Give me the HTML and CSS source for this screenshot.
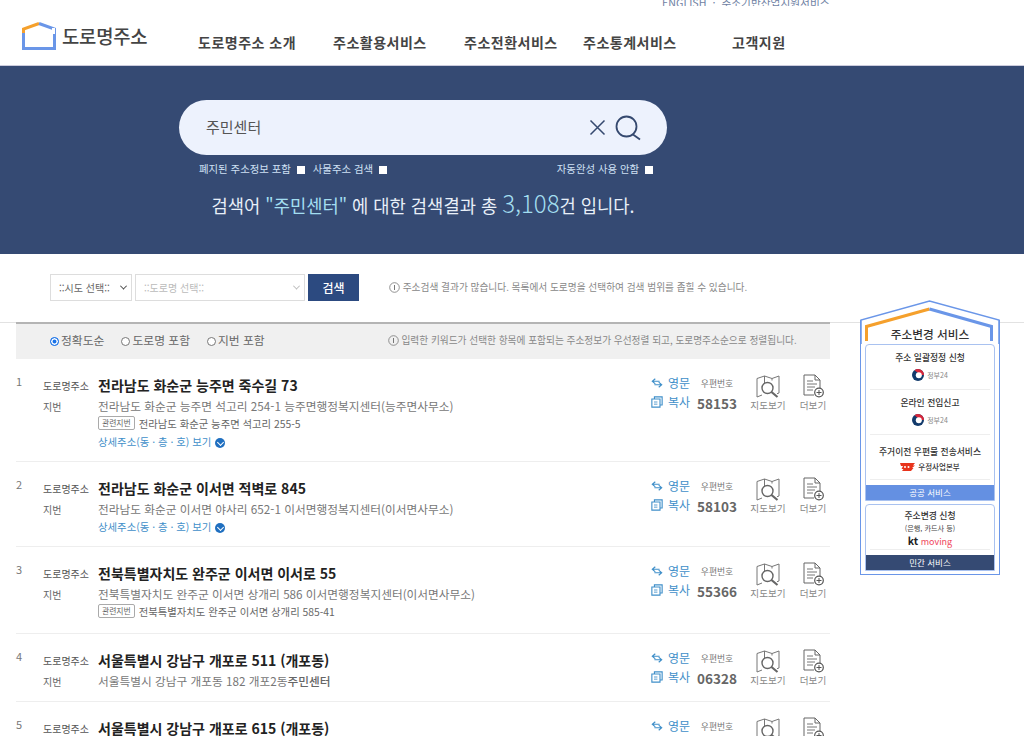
FILE: index.html
```html
<!DOCTYPE html>
<html lang="ko">
<head>
    <meta charset="UTF-8">
    <title>도로명주소 검색결과</title>
    <link rel="stylesheet" href="styles.css">
</head>
<body>
    <svg class="sprites" width="0" height="0">
        <symbol id="i-swap" viewBox="0 0 14 12"><path d="M5 1 1.500 4 5 7M1.500 4H10M9 5l3.500 3L9 11M12.500 8H4" fill="none" stroke="currentColor" stroke-width="1.300"/></symbol>
        <symbol id="i-copy" viewBox="0 0 14 14"><path d="M4 3.500V1h9v9.500h-2.500M1 3.500h9.500V13H1z" fill="none" stroke="currentColor" stroke-width="1.300"/><path d="M3.500 7h4M3.500 9.500h4" stroke="currentColor"/></symbol>
        <symbol id="i-map" viewBox="0 0 24 23"><path d="M1 3.500 8.500 1 16 3.500 23 1v17l-2 .7M8.500 1v7M16 3.500v2M1 3.500V22l5-2" fill="none" stroke="#777" stroke-width="1"/><circle cx="11.500" cy="13" r="5.500" fill="#fff" stroke="#666" stroke-width="1.400"/><path d="M15.500 17l6 5" stroke="#666" stroke-width="2.200"/></symbol>
        <symbol id="i-more" viewBox="0 0 22 24"><path d="M12 21H2V1h11l5 5v8M13 1v5h5" fill="none" stroke="#666"/><path d="M5 7h6M5 10h10M5 13h8M5 16h6" stroke="#777"/><circle cx="17" cy="18.500" r="4.300" fill="#fff" stroke="#555" stroke-width="1.200"/><path d="M14.500 18.500h5M17 16v5" stroke="#555"/></symbol>
        <symbol id="i-info" viewBox="0 0 11 11"><circle cx="5.500" cy="5.500" r="4.800" fill="none" stroke="#777" stroke-width=".8"/><path d="M5.500 3v5" stroke="#777"/></symbol>
        <symbol id="i-gov" viewBox="0 0 12 12"><circle cx="6" cy="6" r="6" fill="#123a6b"/><path d="M2.500 1.200A6 6 0 0 1 12 6H8.500z" fill="#d8263a"/><circle cx="6.800" cy="6.300" r="3" fill="#fff"/></symbol>
        <symbol id="i-post" viewBox="0 0 15 8"><path d="M0 0h15l-2 2.500h2L12 5h1.500L11 8H2l1.500-2H1.500L3 3H1z" fill="#e8341c"/><circle cx="5" cy="4" r="1" fill="#fff"/><circle cx="8.500" cy="4" r="1" fill="#fff"/></symbol>
    </svg>

    <header class="site-header">
        <div class="util-links">ENGLISH &nbsp;·&nbsp; 주소기반산업지원서비스</div>
        <div class="header-main">
            <a class="logo">
                <svg width="34" height="28" viewBox="0 0 34 28">
                    <path d="M1.500 11V7L17 1.500" fill="none" stroke="#f5a02c" stroke-width="3"/>
                    <path d="M17 1.500 32.500 7v19.500h-31V11" fill="none" stroke="#6a96e8" stroke-width="3"/>
                    <path d="M33 9h-3" stroke="#fff" stroke-width="6"/>
                </svg>
                <span>도로명주소</span>
            </a>
            <nav class="main-nav">
                <a class="nav-1">도로명주소 소개</a>
                <a class="nav-2">주소활용서비스</a>
                <a class="nav-3">주소전환서비스</a>
                <a class="nav-4">주소통계서비스</a>
                <a class="nav-5">고객지원</a>
            </nav>
        </div>
    </header>

    <section class="hero">
        <div class="search-box">
            <span class="search-text">주민센터</span>
            <svg width="17" height="17" viewBox="0 0 17 17"><path d="M1.500 1.500l14 14M15.500 1.500l-14 14" stroke="#35496f" stroke-width="1.500"/></svg>
            <svg width="26" height="26" viewBox="0 0 26 26"><circle cx="11.500" cy="11.500" r="10" fill="none" stroke="#35496f" stroke-width="1.800"/><path d="M18 19.500l7 5" stroke="#35496f" stroke-width="1.800"/></svg>
        </div>
        <div class="search-options">
            <label>폐지된 주소정보 포함 <i class="check"></i></label>
            <label>사물주소 검색 <i class="check"></i></label>
            <label class="opt-right">자동완성 사용 안함 <i class="check"></i></label>
        </div>
        <p class="result-summary">검색어 <em>"주민센터"</em> 에 대한 검색결과 총 <strong>3,108</strong>건 입니다.</p>
    </section>

    <div class="filter-bar">
        <div class="fake-select dark">::시도 선택:: <b class="caret"></b></div>
        <div class="fake-select wide">::도로명 선택:: <b class="caret"></b></div>
        <button class="filter-btn">검색</button>
        <p class="note"><svg><use href="#i-info"/></svg> 주소검색 결과가 많습니다. 목록에서 도로명을 선택하여 검색 범위를 좁힐 수 있습니다.</p>
    </div>

    <div class="page-line"></div>

    <aside class="side-box">
        <svg class="roof" width="140" height="44" viewBox="0 0 140 44">
            <path d="M1 44V20L69.500 1 139 20v24" fill="#fff" stroke="#6a96e8" stroke-width="1.500"/>
            <path d="M6.500 41V26.500L69.500 9" fill="none" stroke="#f5a02c" stroke-width="3"/>
            <path d="M69.500 9l62 17.500V41" fill="none" stroke="#6a96e8" stroke-width="3"/>
        </svg>
        <h3>주소변경 서비스</h3>
        <div class="side-group">
            <div class="side-item"><strong>주소 일괄정정 신청</strong><span class="gov"><svg width="12" height="12"><use href="#i-gov"/></svg>정부24</span></div>
            <div class="side-item"><strong>온라인 전입신고</strong><span class="gov"><svg width="12" height="12"><use href="#i-gov"/></svg>정부24</span></div>
            <div class="side-item item-post"><strong>주거이전 우편물 전송서비스</strong><span class="post"><svg width="15" height="8"><use href="#i-post"/></svg>우정사업본부</span></div>
            <div class="side-label blue">공공 서비스</div>
        </div>
        <div class="side-group">
            <div class="side-item last"><strong>주소변경 신청</strong><small>(은행, 카드사 등)</small><span class="kt"><b>kt</b> moving</span></div>
            <div class="side-label navy">민간 서비스</div>
        </div>
    </aside>

    <main class="results">
        <div class="sort-bar">
            <label><i class="radio on"></i>정확도순</label>
            <label><i class="radio"></i>도로명 포함</label>
            <label><i class="radio"></i>지번 포함</label>
            <p class="note"><svg><use href="#i-info"/></svg> 입력한 키워드가 선택한 항목에 포함되는 주소정보가 우선정렬 되고, 도로명주소순으로 정렬됩니다.</p>
        </div>

        <article class="row row-1">
            <span class="num">1</span>
            <div class="addr">
                <div class="line"><span class="tag">도로명주소</span><h2>전라남도 화순군 능주면 죽수길 73</h2></div>
                <div class="line sub"><span class="tag">지번</span><p>전라남도 화순군 능주면 석고리 254-1 능주면행정복지센터(능주면사무소)</p></div>
                <div class="line rel"><span class="rel-tag">관련지번</span>전라남도 화순군 능주면 석고리 255-5</div>
                <a class="detail">상세주소(동 · 층 · 호) 보기 <i class="down"></i></a>
            </div>
            <div class="actions">
                <div class="links"><a><svg><use href="#i-swap"/></svg>영문</a><a><svg><use href="#i-copy"/></svg>복사</a></div>
                <div class="zip"><small>우편번호</small><b>58153</b></div>
                <div class="tool tool-map"><svg class="t-map"><use href="#i-map"/></svg>지도보기</div>
                <div class="tool tool-more"><svg class="t-more"><use href="#i-more"/></svg>더보기</div>
            </div>
        </article>

        <article class="row row-2">
            <span class="num">2</span>
            <div class="addr">
                <div class="line"><span class="tag">도로명주소</span><h2>전라남도 화순군 이서면 적벽로 845</h2></div>
                <div class="line sub"><span class="tag">지번</span><p>전라남도 화순군 이서면 야사리 652-1 이서면행정복지센터(이서면사무소)</p></div>
                <a class="detail">상세주소(동 · 층 · 호) 보기 <i class="down"></i></a>
            </div>
            <div class="actions">
                <div class="links"><a><svg><use href="#i-swap"/></svg>영문</a><a><svg><use href="#i-copy"/></svg>복사</a></div>
                <div class="zip"><small>우편번호</small><b>58103</b></div>
                <div class="tool tool-map"><svg class="t-map"><use href="#i-map"/></svg>지도보기</div>
                <div class="tool tool-more"><svg class="t-more"><use href="#i-more"/></svg>더보기</div>
            </div>
        </article>

        <article class="row row-3">
            <span class="num">3</span>
            <div class="addr">
                <div class="line"><span class="tag">도로명주소</span><h2>전북특별자치도 완주군 이서면 이서로 55</h2></div>
                <div class="line sub"><span class="tag">지번</span><p>전북특별자치도 완주군 이서면 상개리 586 이서면행정복지센터(이서면사무소)</p></div>
                <div class="line rel"><span class="rel-tag">관련지번</span>전북특별자치도 완주군 이서면 상개리 585-41</div>
            </div>
            <div class="actions">
                <div class="links"><a><svg><use href="#i-swap"/></svg>영문</a><a><svg><use href="#i-copy"/></svg>복사</a></div>
                <div class="zip"><small>우편번호</small><b>55366</b></div>
                <div class="tool tool-map"><svg class="t-map"><use href="#i-map"/></svg>지도보기</div>
                <div class="tool tool-more"><svg class="t-more"><use href="#i-more"/></svg>더보기</div>
            </div>
        </article>

        <article class="row row-4">
            <span class="num">4</span>
            <div class="addr">
                <div class="line"><span class="tag">도로명주소</span><h2>서울특별시 강남구 개포로 511 (개포동)</h2></div>
                <div class="line sub"><span class="tag">지번</span><p>서울특별시 강남구 개포동 182 개포2동<b>주민센터</b></p></div>
            </div>
            <div class="actions">
                <div class="links"><a><svg><use href="#i-swap"/></svg>영문</a><a><svg><use href="#i-copy"/></svg>복사</a></div>
                <div class="zip"><small>우편번호</small><b>06328</b></div>
                <div class="tool tool-map"><svg class="t-map"><use href="#i-map"/></svg>지도보기</div>
                <div class="tool tool-more"><svg class="t-more"><use href="#i-more"/></svg>더보기</div>
            </div>
        </article>

        <article class="row row-5">
            <span class="num">5</span>
            <div class="addr">
                <div class="line"><span class="tag">도로명주소</span><h2>서울특별시 강남구 개포로 615 (개포동)</h2></div>
            </div>
            <div class="actions">
                <div class="links"><a><svg><use href="#i-swap"/></svg>영문</a></div>
                <div class="zip"><small>우편번호</small></div>
                <div class="tool tool-map"><svg class="t-map"><use href="#i-map"/></svg></div>
                <div class="tool tool-more"><svg class="t-more"><use href="#i-more"/></svg></div>
            </div>
        </article>
    </main>
</body>
</html>
```
FILE: styles.css
```css
* {
    box-sizing: border-box;
}

html, body {
    height: 736px;
    overflow: hidden;
}

body {
    margin: 0;
    position: relative;
    background: #fff;
    color: #333;
    font-family: "Noto Sans CJK KR", "Noto Sans", sans-serif;
}

p, h2, h3 {
    margin: 0;
}

.sprites {
    position: absolute;
}

.site-header {
    height: 66px;
    border-bottom: 1px solid #ccd;
}

.util-links {
    height: 6px;
    overflow: hidden;
    padding-left: 662px;
    font-size: 10.700px;
    line-height: 6px;
    color: #6f7fa3;
    white-space: nowrap;
}

.header-main {
    display: flex;
}

.logo {
    display: flex;
    align-items: center;
    gap: 6px;
    width: 198px;
    padding: 15px 0 0 22px;
    height: 44px;
}

.logo span {
    font-size: 18.800px;
    font-weight: 500;
    color: #444;
    letter-spacing: -.2px;
}

.main-nav {
    flex: 1;
    display: flex;
    padding-top: 26px;
    font-size: 14px;
    font-weight: 700;
    color: #444;
    line-height: 20px;
    letter-spacing: .5px;
}

.main-nav a {
    white-space: nowrap;
}

.nav-1 { width: 135px; }
.nav-2 { width: 131px; }
.nav-3 { width: 119px; }
.nav-4 { width: 149px; }

.hero {
    height: 188px;
    background: #354a73;
    padding-top: 34px;
}

.search-box {
    display: flex;
    align-items: center;
    width: 488px;
    height: 55px;
    margin-left: 179px;
    padding: 0 26px 0 27px;
    border-radius: 28px;
    background: #edf2fd;
}

.search-text {
    flex: 1;
    padding-bottom: 2px;
    font-size: 15px;
    color: #555;
}

.search-box svg {
    margin-left: 1px;
}

.search-box svg + svg {
    margin-left: 9px;
}

.search-options {
    display: flex;
    gap: 8px;
    margin: 7px 0 0 199px;
    width: 454px;
    font-size: 10.400px;
    line-height: 14px;
    color: #cfe0f4;
}

.opt-right {
    margin-left: auto;
}

.check {
    display: inline-block;
    width: 8px;
    height: 8px;
    margin-left: 3px;
    vertical-align: -1px;
    background: #fff;
}

.result-summary {
    width: 846px;
    margin-top: 13px;
    text-align: center;
    font-size: 17.700px;
    line-height: 28px;
    color: #e8eff8;
}

.result-summary em {
    font-style: normal;
    color: #a3def0;
}

.result-summary strong {
    font-size: 24px;
    font-weight: 300;
    color: #a3def0;
}

.filter-bar {
    display: flex;
    align-items: center;
    height: 68px;
    padding: 0 0 2px 50px;
}

.fake-select {
    display: flex;
    align-items: center;
    justify-content: space-between;
    width: 82px;
    height: 27px;
    padding: 0 5px 0 8px;
    border: 1px solid #ddd;
    font-size: 10px;
    color: #666;
}

.fake-select.wide {
    width: 170px;
    margin-left: 3px;
    color: #bbb;
}

.caret {
    width: 5px;
    height: 5px;
    border-right: 1.500px solid #444;
    border-bottom: 1.500px solid #444;
    transform: rotate(45deg) translate(-1px, -1px);
}

.wide .caret {
    border-color: #bbb;
}

.filter-btn {
    width: 51px;
    height: 27px;
    margin-left: 3px;
    padding: 0;
    border: 0;
    background: #2c4a80;
    color: #fff;
    font: 500 12px "Noto Sans CJK KR", sans-serif;
}

.note {
    margin-left: 30px;
    font-size: 9.700px;
    color: #888;
    white-space: nowrap;
}

.note svg {
    width: 11px;
    height: 11px;
    vertical-align: -2px;
}

.page-line {
    height: 1px;
    background: #e2e2e2;
}

.results {
    width: 814px;
    margin: -1px 0 0 16px;
}

.sort-bar {
    display: flex;
    align-items: center;
    height: 37px;
    padding: 0 0 4px 34px;
    border-top: 2px solid #b4b4b4;
    background: #f0f0f0;
    font-size: 11.800px;
    color: #666;
    gap: 17px;
}

.sort-bar .note {
    margin-left: 106px;
}

.radio {
    display: inline-block;
    width: 9px;
    height: 9px;
    margin-right: 2px;
    vertical-align: -1px;
    border: 1px solid #777;
    border-radius: 50%;
    background: #fff;
}

.radio.on {
    border-color: #1a73e8;
    background: #1a73e8;
    box-shadow: inset 0 0 0 1.500px #fff;
}

.row {
    display: flex;
    border-bottom: 1px solid #eee;
}

.row-1 { height: 103px; }
.row-2 { height: 85px; }
.row-3 { height: 87px; }
.row-4 { height: 68px; }
.row-5 { height: 60px; border: 0; }

.num {
    width: 27px;
    padding-top: 15px;
    font-size: 11px;
    line-height: 14px;
    color: #777;
}

.addr {
    flex: 1;
    padding-top: 15px;
}

.line {
    display: flex;
    align-items: center;
    min-height: 22px;
}

.tag {
    width: 55px;
    font-size: 10px;
    color: #555;
    white-space: nowrap;
}

.line h2 {
    font-size: 14px;
    font-weight: 700;
    color: #222;
    line-height: 21px;
    white-space: nowrap;
}

.line p {
    font-size: 11.700px;
    color: #777;
    line-height: 19px;
    white-space: nowrap;
}

.line p b {
    font-weight: 500;
    color: #666;
}

.sub {
    min-height: 19px;
}

.sub .tag {
    padding-top: 2px;
    color: #666;
}

.rel {
    min-height: 16px;
    margin-bottom: 2px;
    padding-left: 55px;
    font-size: 10.350px;
    color: #666;
}

.rel-tag {
    margin-right: 4px;
    padding: 0 3px;
    border: 1px solid #aaa;
    border-radius: 2px;
    font-size: 7.800px;
    line-height: 12px;
    color: #666;
}

.detail {
    display: block;
    padding-left: 55px;
    font-size: 10.400px;
    line-height: 17px;
    color: #3f8fc9;
}

.down {
    display: inline-flex;
    align-items: center;
    justify-content: center;
    width: 10px;
    height: 10px;
    margin-left: 1px;
    vertical-align: middle;
    border-radius: 50%;
    background: #1f6fc0;
}

.down::after {
    content: "";
    width: 4px;
    height: 4px;
    margin-top: -2px;
    border-right: 1px solid #fff;
    border-bottom: 1px solid #fff;
    transform: rotate(45deg);
}

.actions {
    display: flex;
    flex: none;
    width: 181px;
    padding: 15px 0 0 2px;
}

.links {
    display: flex;
    flex-direction: column;
    width: 46px;
    margin-top: -1px;
}

.links a {
    display: flex;
    align-items: center;
    gap: 5px;
    font-size: 12px;
    line-height: 19px;
    color: #3f8fc9;
}

.links svg {
    width: 12px;
    height: 12px;
}

.zip {
    display: flex;
    flex-direction: column;
    align-items: center;
    width: 40px;
    text-align: center;
}

.zip small {
    font-size: 8.800px;
    line-height: 19px;
    color: #777;
}

.zip b {
    font-size: 13.500px;
    line-height: 20px;
    color: #666;
}

.tool {
    display: flex;
    flex-direction: column;
    align-items: center;
    font-size: 9.600px;
    line-height: 11px;
    color: #888;
    white-space: nowrap;
}

.tool-map {
    width: 36px;
    margin-left: 13px;
}

.tool-more {
    width: 26px;
    margin-left: 14px;
}

.t-map {
    width: 24px;
    height: 23px;
    margin: 1px 0 2px;
}

.t-more {
    width: 22px;
    height: 24px;
    margin-bottom: 2px;
}

.side-box {
    position: absolute;
    left: 860px;
    top: 320px;
    width: 140px;
    height: 255px;
    padding: 24px 4px 0;
    border: solid #6a96e8;
    border-width: 0 1.500px 1.500px;
    background: #fff;
    text-align: center;
}

.roof {
    position: absolute;
    left: -1.500px;
    top: -20px;
}

.side-box h3 {
    position: absolute;
    left: 0;
    right: 0;
    top: 5px;
    font-size: 11.700px;
    font-weight: 500;
    color: #333;
    line-height: 17px;
}

.side-group {
    margin-bottom: 3px;
    border: 1px solid #a9c2f0;
    border-radius: 4px 4px 0 0;
    overflow: hidden;
}

.side-item {
    display: flex;
    flex-direction: column;
    align-items: center;
    height: 45px;
    margin: 0 4px;
    padding-top: 6px;
    border-bottom: 1px solid #eee;
}

.side-item.item-post {
    padding-top: 10px;
}

.side-item.last {
    padding-top: 4px;
}

.side-item strong {
    font-size: 8.800px;
    font-weight: 500;
    line-height: 14px;
    color: #333;
    white-space: nowrap;
}

.side-item small {
    margin-top: 1px;
    font-size: 7.200px;
    line-height: 9px;
    color: #444;
}

.gov, .post {
    display: flex;
    align-items: center;
    gap: 3px;
    height: 15px;
    margin-top: 2px;
    font-size: 7px;
    color: #888;
}

.post {
    margin-top: 0;
    font-size: 7.500px;
    color: #333;
    font-weight: 500;
}

.kt {
    margin-top: 2px;
    font-size: 9px;
    line-height: 11px;
    color: #f0475c;
    white-space: nowrap;
}

.kt b {
    font-size: 10.500px;
    color: #222;
}

.side-label {
    height: 15px;
    margin-top: 5px;
    font-size: 8.500px;
    line-height: 15px;
    color: #fff;
}

.blue {
    background: #6490e2;
}

.navy {
    background: #354a73;
}
```
